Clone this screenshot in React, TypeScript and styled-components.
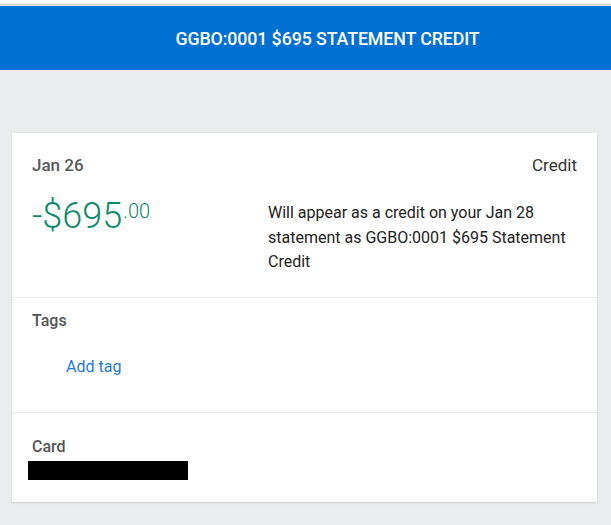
import React from "react";
import styled, { createGlobalStyle } from "styled-components";

const GlobalStyle = createGlobalStyle`
  html, body {
    margin: 0;
    padding: 0;
    background: #ebecee;
    font-family: Roboto, "Liberation Sans", Arial, sans-serif;
  }
`;

const TopStrip = styled.div`
  height: 4px;
  background: #ffffff;
  border-bottom: 1px solid #c9c9c9;
`;

const Header = styled.header`
  margin-top: 1px;
  height: 64px;
  background: #0070d2;
  color: #ffffff;
  display: flex;
  align-items: center;
  justify-content: center;
  padding-left: 44px;
  font-size: 17.8px;
  font-weight: 500;
  letter-spacing: -0.1px;
`;

const Page = styled.main`
  padding: 63px 14px 24px 12px;
`;

const Card = styled.section`
  background: #ffffff;
  box-shadow: 0 1px 2px rgba(0, 0, 0, 0.12);
`;

const Section = styled.div<{ $top: number; $bottom: number }>`
  padding: ${(p) => p.$top}px 20px ${(p) => p.$bottom}px 20px;
  & + & {
    border-top: 1px solid #ececec;
  }
`;

const Row = styled.div`
  display: flex;
  justify-content: space-between;
  align-items: center;
  line-height: 24px;
`;

const DateText = styled.span`
  font-size: 17px;
  font-weight: 500;
  color: #595959;
`;

const TypeText = styled.span`
  font-size: 17px;
  color: #333333;
`;

const AmountRow = styled.div`
  display: grid;
  grid-template-columns: 236px 1fr;
  margin-top: 24px;
`;

const Amount = styled.div`
  color: #118a6c;
  font-size: 36px;
  font-weight: 300;
  line-height: 34px;
  margin-top: -2px;
`;

const Cents = styled.sup`
  font-size: 20px;
  vertical-align: top;
  position: relative;
  top: -5px;
  margin-left: 1px;
`;

const Description = styled.p`
  margin: 0;
  font-size: 16px;
  line-height: 24.5px;
  color: #222222;
`;

const Label = styled.div`
  font-size: 16px;
  font-weight: 500;
  line-height: 24px;
  color: #555555;
`;

const AddTag = styled.button`
  display: block;
  margin: 22px 0 0 34px;
  padding: 0;
  border: none;
  background: none;
  font-family: inherit;
  font-size: 16px;
  line-height: 24px;
  color: #1f7ad6;
  cursor: pointer;
`;

const Redacted = styled.div`
  width: 160px;
  height: 19px;
  margin: 2px 0 0 -4px;
  background: #000000;
`;

export default function App() {
  return (
    <>
      <GlobalStyle />
      <TopStrip />
      <Header>GGBO:0001 $695 STATEMENT CREDIT</Header>
      <Page>
        <Card>
          <Section $top={20} $bottom={22}>
            <Row>
              <DateText>Jan 26</DateText>
              <TypeText>Credit</TypeText>
            </Row>
            <AmountRow>
              <Amount>
                -$695<Cents>.00</Cents>
              </Amount>
              <Description>
                Will appear as a credit on your Jan 28 statement as GGBO:0001
                $695 Statement Credit
              </Description>
            </AmountRow>
          </Section>
          <Section $top={11} $bottom={33}>
            <Label>Tags</Label>
            <AddTag>Add tag</AddTag>
          </Section>
          <Section $top={22} $bottom={22}>
            <Label>Card</Label>
            <Redacted />
          </Section>
        </Card>
      </Page>
    </>
  );
}
